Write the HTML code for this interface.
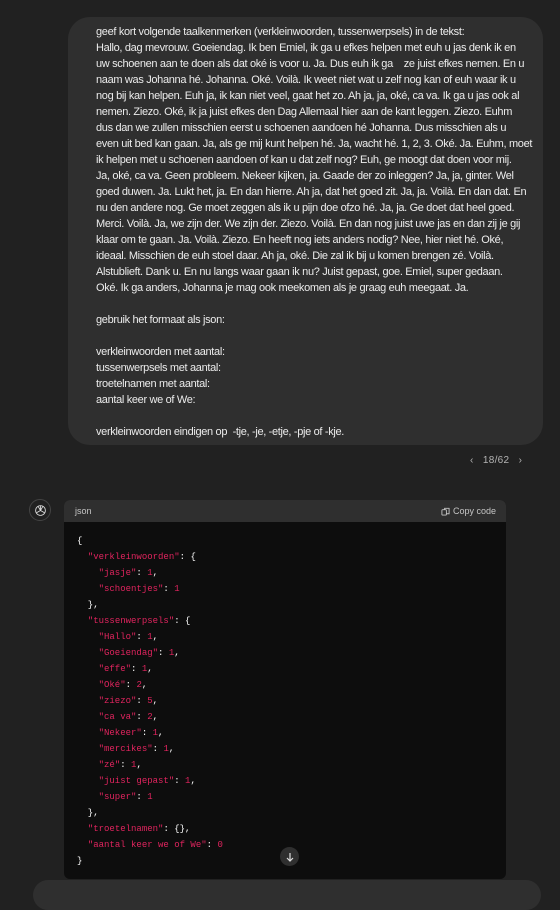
<!DOCTYPE html>
<html><head><meta charset="utf-8"><style>
*{margin:0;padding:0;box-sizing:border-box}
body{width:560px;height:890px;background:#212121;overflow:hidden;position:relative;font-family:"Liberation Sans",sans-serif;color:#ececec}
.bubble{position:absolute;left:68px;top:17px;width:475px;height:428px;background:#2f2f2f;border-radius:22px}
.txt{position:absolute;left:96px;top:24px;font-size:11px;line-height:16px;letter-spacing:-0.33px;white-space:nowrap}
.pg{position:absolute;left:470px;top:455px;font-size:10px;color:#b4b4b4;letter-spacing:0.3px}
.av{position:absolute;left:29px;top:499px;width:22px;height:22px;border-radius:50%;border:1px solid #444;display:flex;align-items:center;justify-content:center}
.code{position:absolute;left:64px;top:500px;width:442px;height:379px;background:#0d0d0d;border-radius:6px;overflow:hidden}
.hd{height:22px;background:#2f2f2f;font-size:9px;color:#c5c5c5;padding:0 10px 0 11px;display:flex;justify-content:space-between;align-items:center}
pre{font-family:"Liberation Mono",monospace;font-size:9px;line-height:16px;color:#fff;padding:11px 0 0 13px}
.s{color:#e0245e}.n{color:#e0245e}
.dn{position:absolute;left:280px;top:847px;width:19px;height:19px;border-radius:50%;background:#2f2f2f;display:flex;align-items:center;justify-content:center}
.inp{position:absolute;left:33px;top:880px;width:508px;height:30px;background:#2f2f2f;border-radius:18px}
</style></head><body>
<div class="bubble"></div>
<div class="txt">geef kort volgende taalkenmerken (verkleinwoorden, tussenwerpsels) in de tekst:<br>
Hallo, dag mevrouw. Goeiendag. Ik ben Emiel, ik ga u efkes helpen met euh u jas denk ik en<br>
uw schoenen aan te doen als dat oké is voor u. Ja. Dus euh ik ga &nbsp;&nbsp;&nbsp;ze juist efkes nemen. En u<br>
naam was Johanna hé. Johanna. Oké. Voilà. Ik weet niet wat u zelf nog kan of euh waar ik u<br>
nog bij kan helpen. Euh ja, ik kan niet veel, gaat het zo. Ah ja, ja, oké, ca va. Ik ga u jas ook al<br>
nemen. Ziezo. Oké, ik ja juist efkes den Dag Allemaal hier aan de kant leggen. Ziezo. Euhm<br>
dus dan we zullen misschien eerst u schoenen aandoen hé Johanna. Dus misschien als u<br>
even uit bed kan gaan. Ja, als ge mij kunt helpen hé. Ja, wacht hé. 1, 2, 3. Oké. Ja. Euhm, moet<br>
ik helpen met u schoenen aandoen of kan u dat zelf nog? Euh, ge moogt dat doen voor mij.<br>
Ja, oké, ca va. Geen probleem. Nekeer kijken, ja. Gaade der zo inleggen? Ja, ja, ginter. Wel<br>
goed duwen. Ja. Lukt het, ja. En dan hierre. Ah ja, dat het goed zit. Ja, ja. Voilà. En dan dat. En<br>
nu den andere nog. Ge moet zeggen als ik u pijn doe ofzo hé. Ja, ja. Ge doet dat heel goed.<br>
Merci. Voilà. Ja, we zijn der. We zijn der. Ziezo. Voilà. En dan nog juist uwe jas en dan zij je gij<br>
klaar om te gaan. Ja. Voilà. Ziezo. En heeft nog iets anders nodig? Nee, hier niet hé. Oké,<br>
ideaal. Misschien de euh stoel daar. Ah ja, oké. Die zal ik bij u komen brengen zé. Voilà.<br>
Alstublieft. Dank u. En nu langs waar gaan ik nu? Juist gepast, goe. Emiel, super gedaan.<br>
Oké. Ik ga anders, Johanna je mag ook meekomen als je graag euh meegaat. Ja.<br>
<br>
gebruik het formaat als json:<br>
<br>
verkleinwoorden met aantal:<br>
tussenwerpsels met aantal:<br>
troetelnamen met aantal:<br>
aantal keer we of We:<br>
<br>
verkleinwoorden eindigen op &nbsp;-tje, -je, -etje, -pje of -kje.</div>
<div class="pg">&#8249;&nbsp;&nbsp;&nbsp;18/62&nbsp;&nbsp;&nbsp;&#8250;</div>
<div class="av"><svg width="13" height="13" viewBox="0 0 24 24" fill="none" stroke="#ddd" stroke-width="1.6"><circle cx="12" cy="12" r="9"/><path d="M12 3v9l7 4M12 12l-7 4M8 5l4 7M16 5l-4 7"/></svg></div>
<div class="code">
<div class="hd"><span>json</span><span style="display:flex;align-items:center;gap:3px"><svg width="9" height="9" viewBox="0 0 10 10" fill="none" stroke="#c5c5c5" stroke-width="1"><rect x="1" y="3" width="5" height="6" rx="1"/><path d="M4 3V1.5h5v6H6"/></svg>Copy code</span></div>
<pre>{
  <span class="s">"verkleinwoorden"</span>: {
    <span class="s">"jasje"</span>: <span class="n">1</span>,
    <span class="s">"schoentjes"</span>: <span class="n">1</span>
  },
  <span class="s">"tussenwerpsels"</span>: {
    <span class="s">"Hallo"</span>: <span class="n">1</span>,
    <span class="s">"Goeiendag"</span>: <span class="n">1</span>,
    <span class="s">"effe"</span>: <span class="n">1</span>,
    <span class="s">"Oké"</span>: <span class="n">2</span>,
    <span class="s">"ziezo"</span>: <span class="n">5</span>,
    <span class="s">"ca va"</span>: <span class="n">2</span>,
    <span class="s">"Nekeer"</span>: <span class="n">1</span>,
    <span class="s">"mercikes"</span>: <span class="n">1</span>,
    <span class="s">"zé"</span>: <span class="n">1</span>,
    <span class="s">"juist gepast"</span>: <span class="n">1</span>,
    <span class="s">"super"</span>: <span class="n">1</span>
  },
  <span class="s">"troetelnamen"</span>: {},
  <span class="s">"aantal keer we of We"</span>: <span class="n">0</span>
}</pre>
</div>
<div class="dn"><svg width="10" height="10" viewBox="0 0 10 10" fill="none" stroke="#ddd" stroke-width="1.2"><path d="M5 1v8M2 6l3 3 3-3"/></svg></div>
<div class="inp"></div>
</body></html>
